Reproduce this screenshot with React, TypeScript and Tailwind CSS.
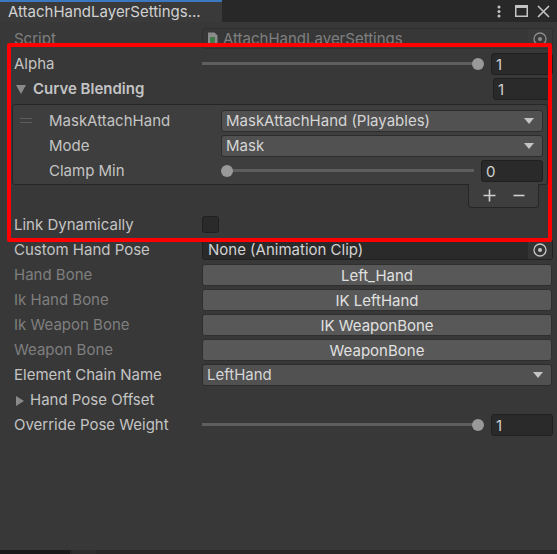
import type { ReactNode } from 'react';

const font = { fontFamily: 'Inter, "Noto Sans", sans-serif' };

// small drawings used by the inspector fields
function DropArrow() {
  return (
    <svg width="10" height="6" viewBox="0 0 10 6" className="shrink-0">
      <polygon points="0,0 10,0 5,6" fill="#c4c4c4" />
    </svg>
  );
}

function TargetIcon() {
  return (
    <svg width="14" height="14" viewBox="0 0 14 14">
      <circle cx="7" cy="7" r="6" fill="none" stroke="#c4c4c4" strokeWidth="1.3" />
      <circle cx="7" cy="7" r="2" fill="#c4c4c4" />
    </svg>
  );
}

function ScriptIcon() {
  return (
    <svg width="11" height="14" viewBox="0 0 11 14" className="shrink-0">
      <path d="M1 0.5h6.5l3 3v10h-9.5z" fill="#8c8c8c" />
      <rect x="3" y="5" width="5" height="6" fill="#3f7d4c" />
    </svg>
  );
}

function Row({ label, dim, children, bold }: { label: ReactNode; dim?: boolean; bold?: boolean; children?: ReactNode }) {
  return (
    <div className="flex h-[25px] items-center">
      <div
        className={`w-[188px] shrink-0 truncate pt-[2px] ${dim ? 'text-[#7f7f7f]' : 'text-[#c4c4c4]'} ${bold ? 'font-semibold' : ''}`}
      >
        {label}
      </div>
      <div className="flex min-w-0 flex-1 items-center">{children}</div>
    </div>
  );
}

function NumberField({ value, w = 'w-[62px]' }: { value: string; w?: string }) {
  return (
    <div className={`${w} h-[22px] shrink-0 rounded-[3px] border border-[#1f1f1f] bg-[#2a2a2a] pl-[4px] leading-[21px] text-[#d2d2d2]`}>
      {value}
    </div>
  );
}

function Slider({ at, value, field = 'w-[62px]', gap = 'ml-[7px]' }: { at: 'start' | 'end'; value: string; field?: string; gap?: string }) {
  return (
    <div className="flex flex-1 items-center">
      <div className="relative flex h-[14px] flex-1 items-center">
        <div className={`h-[3px] flex-1 bg-[#5e5e5e] ${at === 'start' ? 'ml-[6px]' : 'mr-[6px]'}`} />
        <div
          className={`absolute top-[1px] h-[12px] w-[12px] rounded-full bg-[#999999] ${at === 'start' ? 'left-0' : 'right-0'}`}
        />
      </div>
      <div className={gap}>
        <NumberField value={value} w={field} />
      </div>
    </div>
  );
}

function Dropdown({ text }: { text: string }) {
  return (
    <div className="flex h-[22px] flex-1 items-center justify-between rounded-[3px] border border-[#2c2c2c] bg-[#515151] pl-[4px] pr-[8px] text-[#d6d6d6]">
      <span className="truncate pt-[1px]">{text}</span>
      <DropArrow />
    </div>
  );
}

function BoneButton({ text }: { text: string }) {
  return (
    <div className="mr-[1px] h-[22px] flex-1 rounded-[3px] border border-[#2f2f2f] bg-[#585858] text-center leading-[21px] text-[#e0e0e0]">
      {text}
    </div>
  );
}

export default function App() {
  return (
    <div className="flex h-[554px] w-[557px] flex-col overflow-hidden bg-[#383838] text-[15px]" style={font}>
      {/* tab strip */}
      <div className="flex h-[22px] shrink-0 bg-[#282828]">
        <div className="w-[222px] border-t-2 border-[#3b78c0] bg-[#3a3a3a] pl-[8px] leading-[20px] text-[#d2d2d2]">
          AttachHandLayerSettings...
        </div>
        <div className="flex flex-1 items-center justify-end gap-[9px] pr-[7px]">
          <svg width="4" height="13" viewBox="0 0 4 13">
            <circle cx="2" cy="2" r="1.5" fill="#c4c4c4" />
            <circle cx="2" cy="6.5" r="1.5" fill="#c4c4c4" />
            <circle cx="2" cy="11" r="1.5" fill="#c4c4c4" />
          </svg>
          <svg width="13" height="12" viewBox="0 0 13 12" className="ml-[5px]">
            <rect x="0.75" y="0.75" width="11.5" height="10.5" fill="none" stroke="#c4c4c4" strokeWidth="1.5" />
            <rect x="0.5" y="0.5" width="12" height="2.5" fill="#c4c4c4" />
          </svg>
          <svg width="13" height="13" viewBox="0 0 13 13">
            <path d="M1 1L12 12M12 1L1 12" stroke="#c4c4c4" strokeWidth="1.6" />
          </svg>
        </div>
      </div>

      {/* inspector body */}
      <div className="relative flex-1 pl-[14px] pr-[4px] pt-[4px]">
        <Row label="Script" dim>
          <div className="flex h-[21px] flex-1 items-center rounded-[3px] border border-[#303030] bg-[#373737] text-[#7f7f7f]">
            <div className="flex flex-1 items-center gap-[5px] pl-[4px]">
              <ScriptIcon />
              <span className="truncate pt-[1px]">AttachHandLayerSettings</span>
            </div>
            <div className="flex h-full w-[24px] items-center justify-center bg-[#3d3d3d] opacity-60">
              <TargetIcon />
            </div>
          </div>
        </Row>

        <Row label="Alpha">
          <Slider at="end" value="1" />
        </Row>

        <Row
          bold
          label={
            <span className="flex items-center gap-[7px] pl-[2px]">
              <svg width="10" height="9" viewBox="0 0 10 9">
                <polygon points="0,0 10,0 5,9" fill="#8a8a8a" />
              </svg>
              Curve Blending
            </span>
          }
        >
          <div className="flex flex-1 justify-end pr-[3px]">
            <NumberField value="1" w="w-[57px]" />
          </div>
        </Row>

        {/* reorderable list */}
        <div className="ml-[-2px] mr-[5px] mt-[3px] rounded-[3px] border border-[#262626] bg-[#3e3e3e] pb-[1px] pr-[4px] pt-[3px]">
          <div className="flex h-[25px] items-center">
            <div className="flex w-[36px] shrink-0 flex-col gap-[3px] pl-[7px]">
              <div className="h-[1px] w-[12px] bg-[#5c5c5c]" />
              <div className="h-[1px] w-[12px] bg-[#5c5c5c]" />
            </div>
            <div className="w-[172px] shrink-0 pt-[2px] text-[#c4c4c4]">MaskAttachHand</div>
            <Dropdown text="MaskAttachHand (Playables)" />
          </div>
          <div className="flex h-[25px] items-center">
            <div className="w-[36px] shrink-0" />
            <div className="w-[172px] shrink-0 pt-[2px] text-[#c4c4c4]">Mode</div>
            <Dropdown text="Mask" />
          </div>
          <div className="flex h-[25px] items-center">
            <div className="w-[36px] shrink-0" />
            <div className="w-[172px] shrink-0 pt-[2px] text-[#c4c4c4]">Clamp Min</div>
            <Slider at="start" value="0" />
          </div>
        </div>
        <div className="mr-[14px] flex justify-end">
          <div className="mt-[-1px] flex h-[24px] w-[71px] items-center justify-center gap-[17px] rounded-b-[4px] border border-t-0 border-[#262626] bg-[#3e3e3e] text-[#d0d0d0]">
            <svg width="13" height="13" viewBox="0 0 13 13">
              <path d="M6.5 0.5v12M0.5 6.5h12" stroke="#d0d0d0" strokeWidth="1.6" />
            </svg>
            <svg width="12" height="13" viewBox="0 0 12 13">
              <path d="M0.5 6.5h11" stroke="#d0d0d0" strokeWidth="1.6" />
            </svg>
          </div>
        </div>

        <div className="mt-[4px]">
          <Row label="Link Dynamically">
            <div className="h-[17px] w-[17px] rounded-[3px] border border-[#1f1f1f] bg-[#2a2a2a]" />
          </Row>
        </div>

        <Row label="Custom Hand Pose">
          <div className="flex h-[21px] flex-1 items-center rounded-[3px] border border-[#212121] bg-[#2a2a2a] text-[#d2d2d2]">
            <span className="flex-1 truncate pl-[5px] pt-[1px]">None (Animation Clip)</span>
            <div className="flex h-full w-[24px] items-center justify-center bg-[#343434]">
              <TargetIcon />
            </div>
          </div>
        </Row>
        <Row label="Hand Bone" dim>
          <BoneButton text="Left_Hand" />
        </Row>
        <Row label="Ik Hand Bone" dim>
          <BoneButton text="IK LeftHand" />
        </Row>
        <Row label="Ik Weapon Bone" dim>
          <BoneButton text="IK WeaponBone" />
        </Row>
        <Row label="Weapon Bone" dim>
          <BoneButton text="WeaponBone" />
        </Row>
        <Row label="Element Chain Name">
          <div className="mr-[1px] flex flex-1">
            <Dropdown text="LeftHand" />
          </div>
        </Row>
        <Row
          label={
            <span className="flex items-center gap-[6px] pl-[2px]">
              <svg width="8" height="10" viewBox="0 0 8 10">
                <polygon points="0,0 8,5 0,10" fill="#8a8a8a" />
              </svg>
              Hand Pose Offset
            </span>
          }
        />
        <Row label="Override Pose Weight">
          <Slider at="end" value="1" />
        </Row>

        {/* highlight frame drawn over the blending section */}
        <div className="pointer-events-none absolute left-[7px] top-[21px] h-[199px] w-[545px] rounded-[2px] border-4 border-[#ff0000]" />
      </div>

      {/* bottom status strip */}
      <div className="flex h-[4px] shrink-0 bg-[#282828]">
        <div className="w-[70px] bg-[#191919]" />
        <div className="ml-[2px] w-[24px] bg-[#2d2d2d]" />
      </div>
    </div>
  );
}
